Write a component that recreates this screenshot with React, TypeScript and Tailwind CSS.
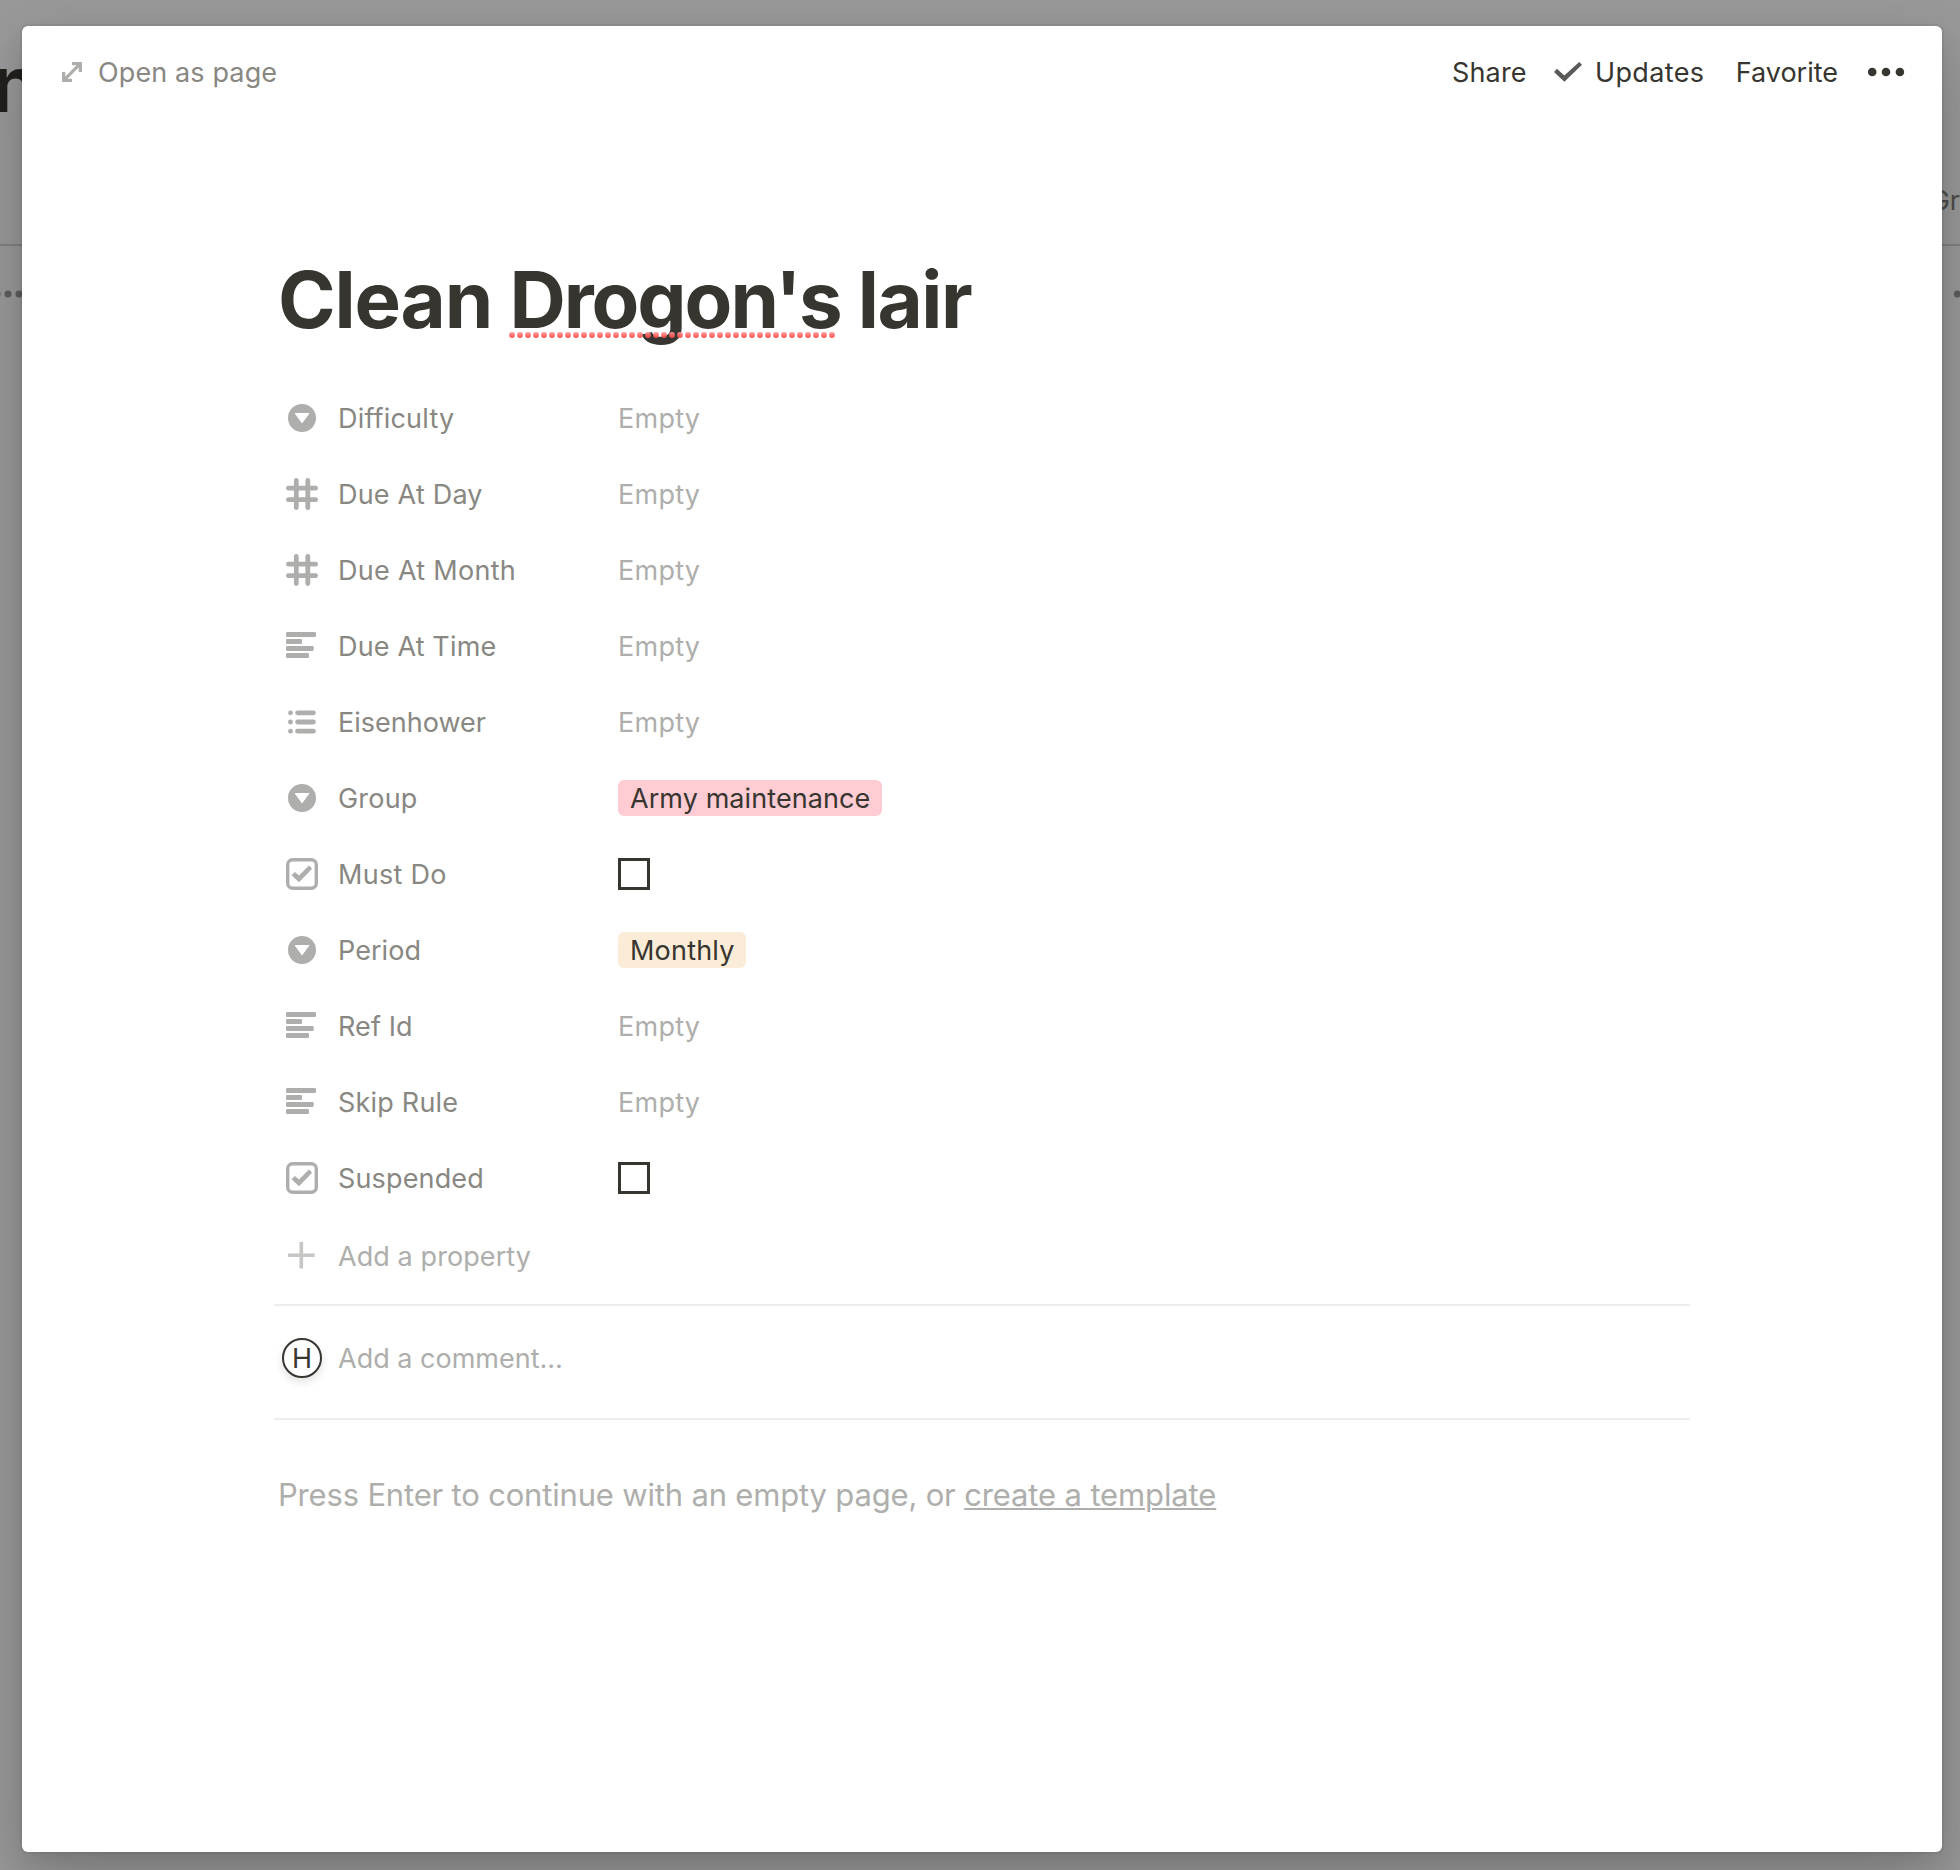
import React from 'react';

type IconKind = 'select' | 'number' | 'text' | 'list' | 'checkbox';

function PropertyIcon({ kind }: { kind: IconKind }) {
  return (
    <svg viewBox="0 0 32 32" className="h-8 w-8 shrink-0 text-[#aeaeac]" fill="currentColor">
      {kind === 'select' && (
        <path fillRule="evenodd" d="M16 2a14 14 0 1 1 0 28a14 14 0 0 1 0-28ZM9.2 11Q8.6 11 9 11.7L15.4 20.8Q16 21.7 16.6 20.8L23.2 11.7Q23.6 11 23 11Z" />
      )}
      {kind === 'number' && (
        <path d="M10.3 2.4V29.6M21.8 2.4V29.6M2.4 10.2H29.6M2.4 21.7H29.6" fill="none" stroke="currentColor" strokeWidth="4.8" strokeLinecap="round" />
      )}
      {kind === 'text' && (
        <>
          <rect x="0" y="2" width="30" height="5" rx="1.2" />
          <rect x="0" y="9" width="16" height="5" rx="1.2" />
          <rect x="0" y="16" width="27.7" height="5" rx="1.2" />
          <rect x="0" y="23" width="23" height="5" rx="1.2" />
        </>
      )}
      {kind === 'list' && (
        <>
          <circle cx="4.5" cy="6.8" r="2.4" />
          <circle cx="4.5" cy="16" r="2.4" />
          <circle cx="4.5" cy="25.2" r="2.4" />
          <rect x="9.2" y="4.4" width="20.6" height="4.8" rx="2.4" />
          <rect x="9.2" y="13.6" width="20.6" height="4.8" rx="2.4" />
          <rect x="9.2" y="22.8" width="20.6" height="4.8" rx="2.4" />
        </>
      )}
      {kind === 'checkbox' && (
        <>
          <rect x="1.7" y="1.7" width="28.6" height="28.6" rx="5" fill="none" stroke="currentColor" strokeWidth="3.4" />
          <path d="M5.6 17.2L8.9 13.9L13 17.4L22.9 7.4L26.2 10.7L13 24.3Z" />
        </>
      )}
    </svg>
  );
}

function Empty() {
  return <span className="pt-px tracking-[0.25px] text-[#aeaeac]">Empty</span>;
}

function Checkbox() {
  return <span className="block h-8 w-8 border-3 border-[#37352f]" />;
}

const properties: { icon: IconKind; label: React.ReactNode; value: React.ReactNode }[] = [
  { icon: 'select', label: 'Difficulty', value: <Empty /> },
  { icon: 'number', label: 'Due At Day', value: <Empty /> },
  { icon: 'number', label: <span className="tracking-[0.28px]">Due At Month</span>, value: <Empty /> },
  { icon: 'text', label: <span className="tracking-[0.15px]">Due At Time</span>, value: <Empty /> },
  { icon: 'list', label: <span className="tracking-normal">Eisenhower</span>, value: <Empty /> },
  {
    icon: 'select',
    label: 'Group',
    value: (
      <span className="flex h-9 w-[264px] items-center rounded-md bg-[#ffccd3] pt-px pl-3 tracking-[0.08px] text-[#37352f]">Army maintenance</span>
    ),
  },
  { icon: 'checkbox', label: <span className="tracking-[0.3px]">Must Do</span>, value: <Checkbox /> },
  {
    icon: 'select',
    label: <span className="tracking-[0.05px]">Period</span>,
    value: <span className="flex h-9 w-32 items-center rounded-md bg-[#faecd6] pt-px pl-3 tracking-[0.2px] text-[#37352f]">Monthly</span>,
  },
  { icon: 'text', label: <span className="tracking-[0.1px]">Ref Id</span>, value: <Empty /> },
  { icon: 'text', label: 'Skip Rule', value: <Empty /> },
  { icon: 'checkbox', label: <span className="tracking-[0.15px]">Suspended</span>, value: <Checkbox /> },
];

function SpellingMarks() {
  return (
    <svg className="absolute top-[80px] left-0 h-1.5 w-[328px]" viewBox="0 0 328 6">
      <defs>
        <linearGradient id="spell" x1="0" y1="0" x2="0" y2="1">
          <stop offset="0" stopColor="#ff9a98" />
          <stop offset="0.45" stopColor="#fb6e6c" />
          <stop offset="1" stopColor="#ff4a48" />
        </linearGradient>
      </defs>
      {Array.from({ length: 41 }, (_, i) => (
        <circle key={i} cx={3 + i * 8} cy="3" r="2.9" fill="url(#spell)" opacity="0.92" />
      ))}
    </svg>
  );
}

function PageBehind() {
  return (
    <div className="absolute inset-0 overflow-hidden bg-white">
      <div className="flex h-[186px] items-start pt-11">
        <span className="-ml-[9px] text-[78px] leading-[80px] font-bold text-[#302e28]">n</span>
      </div>
      <div className="flex h-[58px] justify-end">
        <span className="h-7 pt-px text-[27px] leading-7 tracking-normal text-[#7c7b77]">Gr</span>
      </div>
      <div className="h-0.5 bg-[#d6d6d5]" />
      <div className="flex h-24 items-center justify-between text-[#989796]">
        <svg className="h-2 w-[30px]" viewBox="0 0 30 8" fill="currentColor">
          <circle cx="-3" cy="4" r="3.5" />
          <circle cx="8" cy="4" r="3.5" />
          <circle cx="19" cy="4" r="3.5" />
        </svg>
        <svg className="h-2 w-[7px]" viewBox="0 0 7 8" fill="currentColor">
          <circle cx="4.3" cy="4" r="3.5" />
        </svg>
      </div>
    </div>
  );
}

export default function App() {
  return (
    <div className="relative h-[1870px] w-[1960px] overflow-hidden font-['Inter',sans-serif] text-[27px] leading-10 tracking-[0.2px] whitespace-nowrap">
      <PageBehind />
      <div className="relative h-full bg-[rgba(15,15,15,0.425)] pt-[26px] pl-[22px]">
        <main className="h-[1826px] w-[1920px] rounded-md bg-white shadow-[0_0_0_2px_rgba(15,15,15,0.05),0_10px_20px_rgba(15,15,15,0.1),0_30px_80px_rgba(15,15,15,0.2)]">
          <header className="flex h-23 items-center pr-[37px] pl-10">
            <svg className="h-5 w-5 text-[#aeaeac]" viewBox="0 0 20 20" fill="currentColor">
              <path d="M10 0H20V10H16.7V5.6L5.6 16.7H10V20H0V10H3.3V14.4L14.4 3.3H10Z" />
            </svg>
            <span className="ml-[16px] pt-px tracking-[0.12px] text-[#888782]">Open as page</span>
            <div className="ml-auto flex items-center text-[#37352f]">
              <span className="w-[102px] pt-px tracking-[0.15px]">Share</span>
              <svg className="h-5 w-7 text-[#5a5a58]" viewBox="0 0 28 20" fill="currentColor">
                <path d="M0 10L3 6.8L10.3 13.6L25.2 0L28 2.8L10.4 19.8Z" />
              </svg>
              <span className="ml-[13px] w-[140.7px] pt-px tracking-[0.35px]">Updates</span>
              <span className="w-[132.3px] pt-px tracking-normal">Favorite</span>
              <svg className="h-2.5 w-[37px]" viewBox="0 0 37 10" fill="currentColor">
                <circle cx="4.2" cy="5" r="4.3" />
                <circle cx="18" cy="5" r="4.3" />
                <circle cx="31.9" cy="5" r="4.3" />
              </svg>
            </div>
          </header>

          <div className="ml-[252px] w-[1416px]">
            <h1 className="mt-[142px] ml-1 h-20 text-[78px] leading-[80px] font-bold text-[#37352f]">
              <span className="tracking-[-1.15px]">Clean </span>
              <span className="relative tracking-[-2.05px]">
                Drogon&apos;s
                <SpellingMarks />
              </span>
              <span className="tracking-[-1.4px]"> lair</span>
            </h1>

            <div className="mt-10 flex flex-col pl-3">
              {properties.map((p, i) => (
                <div key={i} className="flex h-19 items-center">
                  <PropertyIcon kind={p.icon} />
                  <span className="ml-5 w-[280px] pt-px text-[#888782]">{p.label}</span>
                  {p.value}
                </div>
              ))}
            </div>

            <div className="flex h-[90px] items-center border-b-2 border-[#ededec] pb-[8px] pl-3.5">
              <svg className="-mt-px h-[27px] w-[27px] text-[#c6c6c4]" viewBox="0 0 27 27" fill="none" stroke="currentColor" strokeWidth="3.6">
                <path d="M13.3 0V26.6M0 13.3H26.6" />
              </svg>
              <span className="ml-[23px] pt-px tracking-[0.08px] text-[#aeaeac]">Add a property</span>
            </div>

            <div className="flex h-[114px] items-center border-b-2 border-[#ededec] pb-2 pl-2">
              <span className="flex h-10 w-10 items-center justify-center rounded-full border-2 border-[#37352f] bg-white pt-px text-[27px] tracking-normal text-[#37352f] shadow-[0_4px_8px_rgba(15,15,15,0.12)]">
                H
              </span>
              <span className="ml-4 pt-px tracking-normal text-[#aeaeac]">Add a comment…</span>
            </div>

            <p className="mt-[55px] ml-[4px] text-[31px] leading-10 tracking-[-0.18px] text-[#aeaeac]">
              Press Enter to continue with an empty page, or{' '}
              <span className="tracking-[-0.13px] underline decoration-2 underline-offset-[2px]">create a template</span>
            </p>
          </div>
        </main>
      </div>
    </div>
  );
}
